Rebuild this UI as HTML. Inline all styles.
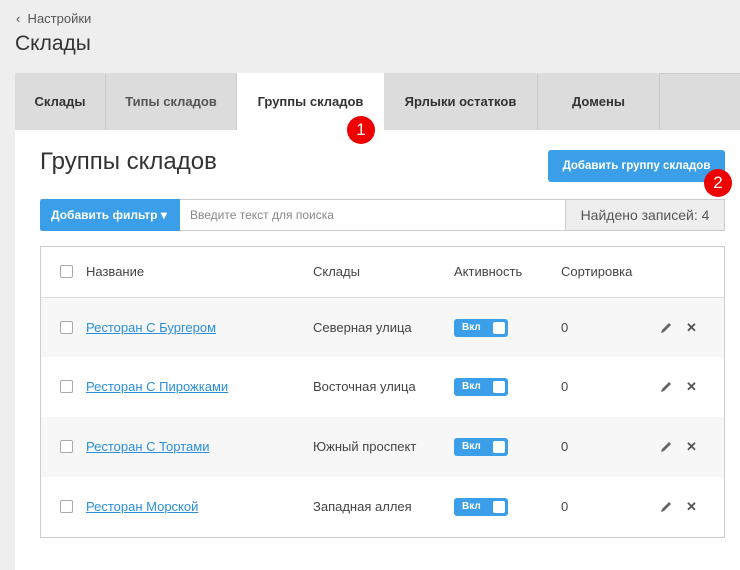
<!DOCTYPE html><html><head><meta charset="utf-8"><style>
*{margin:0;padding:0;box-sizing:border-box}
body{width:740px;height:570px;background:#eee;font-family:"Liberation Sans",sans-serif;position:relative;overflow:hidden;color:#333}
.a{position:absolute}
.tab{position:absolute;top:73px;height:57px;line-height:57px;text-align:center;font-size:13px;font-weight:bold;color:#333;border-right:1px solid #ccc;background:#dcdcdc}
.badge{position:absolute;width:28px;height:28px;border-radius:50%;background:#e00;color:#fff;font-size:17px;text-align:center;line-height:28px}
.row{position:absolute;left:41px;width:683px;height:60px;font-size:13px;color:#444}
.row span{position:absolute;top:0;line-height:60px}
.cb{position:absolute;left:19px;top:23px;width:13px;height:13px;border:1px solid #aaa;background:#fff;border-radius:2px}
.lnk{color:#2a8fd8;text-decoration:underline}
.tg{position:absolute;left:413px;top:21px;width:54px;height:18px;background:#3a9fe8;border-radius:3px}
.tg b{position:absolute;left:8px;top:3px;font-size:10px;color:#fff;line-height:12px}
.tg i{position:absolute;right:3px;top:3px;width:12px;height:12px;background:#fff;border-radius:2px}
.ed{position:absolute;left:618px;top:23px}
</style></head><body>
<div class="a" style="left:16px;top:11px;font-size:13px;color:#555">‹&nbsp; Настройки</div>
<div class="a" style="left:15px;top:32px;font-size:21px;color:#333">Склады</div>
<div class="a" style="left:15px;top:73px;width:725px;height:57px;background:#dcdcdc;border-top:1px solid #ccc"></div>
<div class="tab" style="left:15px;width:91px">Склады</div>
<div class="tab" style="left:106px;width:131px;color:#555">Типы складов</div>
<div class="tab" style="left:237px;width:147px;background:#fff;border:none">Группы складов</div>
<div class="tab" style="left:384px;width:154px">Ярлыки остатков</div>
<div class="tab" style="left:538px;width:122px">Домены</div>
<div class="a" style="left:15px;top:130px;width:725px;height:440px;background:#fff"></div>
<div class="badge" style="left:347px;top:116px">1</div>
<div class="a" style="left:40px;top:148px;font-size:24px;color:#333">Группы складов</div>
<div class="a" style="left:548px;top:150px;width:177px;height:32px;background:#3a9fe8;border-radius:3px;color:#fff;font-size:11.5px;font-weight:bold;line-height:32px;text-align:center">Добавить группу складов</div>
<div class="badge" style="left:704px;top:169px">2</div>
<div class="a" style="left:40px;top:199px;width:685px;height:32px;border:1px solid #ccc"></div>
<div class="a" style="left:40px;top:199px;width:140px;height:32px;background:#3a9fe8;border-radius:3px 0 0 3px;color:#fff;font-size:12px;font-weight:bold;line-height:32px;padding-left:11px">Добавить фильтр ▾</div>
<div class="a" style="left:190px;top:199px;line-height:32px;font-size:12px;color:#888">Введите текст для поиска</div>
<div class="a" style="left:565px;top:199px;width:160px;height:32px;background:#eee;border:1px solid #ccc;font-size:14px;color:#555;line-height:30px;text-align:center">Найдено записей: 4</div>
<div class="a" style="left:40px;top:246px;width:685px;height:292px;border:1px solid #ccc"></div>
<div class="row" style="top:242px"><div class="cb"></div><span style="left:45px">Название</span><span style="left:272px">Склады</span><span style="left:413px">Активность</span><span style="left:520px">Сортировка</span></div>
<div class="row" style="top:297px;background:#f7f7f7;border-top:1px solid #ddd"><div class="cb"></div><span class="lnk" style="left:45px">Ресторан С Бургером</span><span style="left:272px">Северная улица</span><div class="tg"><b>Вкл</b><i></i></div><span style="left:520px">0</span><svg class="ed" width="14" height="14" viewBox="0 0 14 14"><path d="M2 12l1-3 7-7 2 2-7 7z" fill="#666"/></svg><span style="left:645px;font-weight:bold;color:#555">✕</span></div>
<div class="row" style="top:357px"><div class="cb"></div><span class="lnk" style="left:45px">Ресторан С Пирожками</span><span style="left:272px">Восточная улица</span><div class="tg"><b>Вкл</b><i></i></div><span style="left:520px">0</span><svg class="ed" width="14" height="14" viewBox="0 0 14 14"><path d="M2 12l1-3 7-7 2 2-7 7z" fill="#666"/></svg><span style="left:645px;font-weight:bold;color:#555">✕</span></div>
<div class="row" style="top:417px;background:#f7f7f7"><div class="cb"></div><span class="lnk" style="left:45px">Ресторан С Тортами</span><span style="left:272px">Южный проспект</span><div class="tg"><b>Вкл</b><i></i></div><span style="left:520px">0</span><svg class="ed" width="14" height="14" viewBox="0 0 14 14"><path d="M2 12l1-3 7-7 2 2-7 7z" fill="#666"/></svg><span style="left:645px;font-weight:bold;color:#555">✕</span></div>
<div class="row" style="top:477px"><div class="cb"></div><span class="lnk" style="left:45px">Ресторан Морской</span><span style="left:272px">Западная аллея</span><div class="tg"><b>Вкл</b><i></i></div><span style="left:520px">0</span><svg class="ed" width="14" height="14" viewBox="0 0 14 14"><path d="M2 12l1-3 7-7 2 2-7 7z" fill="#666"/></svg><span style="left:645px;font-weight:bold;color:#555">✕</span></div>
</body></html>
